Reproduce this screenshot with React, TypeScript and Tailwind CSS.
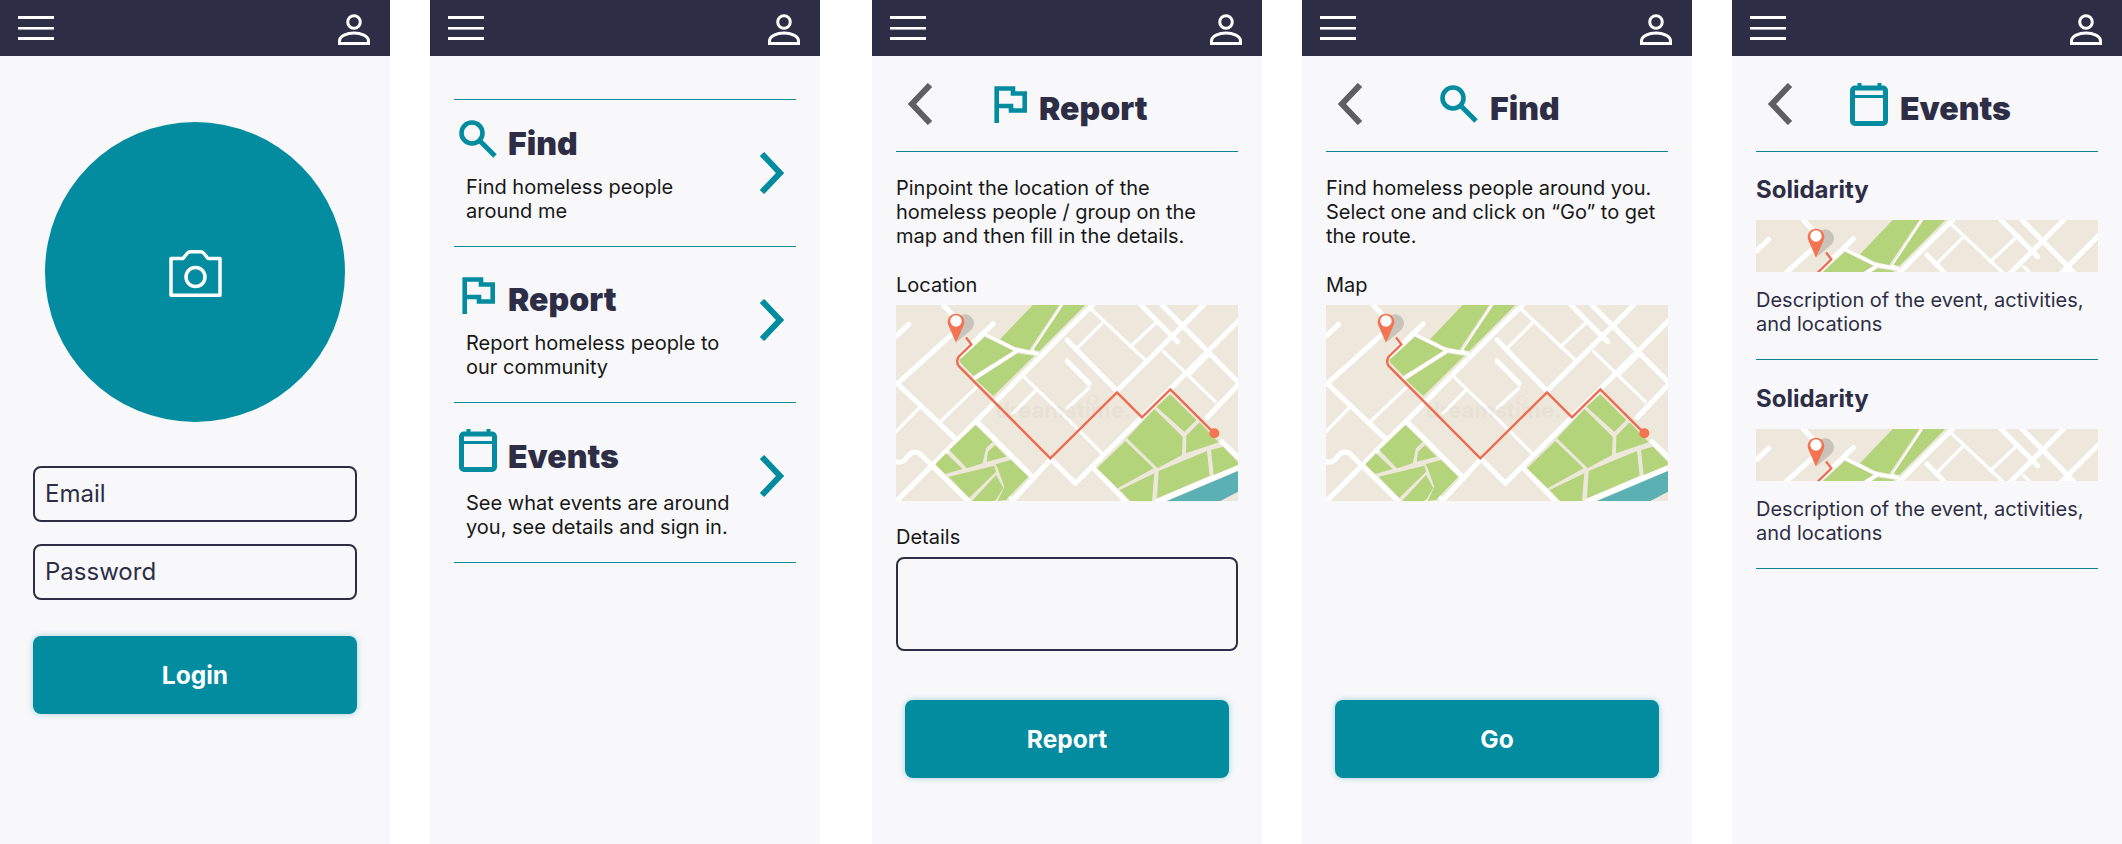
import React from "react";

const font = { fontFamily: "Inter, 'Liberation Sans', sans-serif" };

function Burger() {
  return (
    <svg width="36" height="24" viewBox="0 0 36 24" fill="#fff">
      <rect y="0" width="36" height="3" />
      <rect y="11" width="36" height="2.6" />
      <rect y="21" width="36" height="3" />
    </svg>
  );
}
function User() {
  return (
    <svg width="32" height="32" viewBox="0 0 32 32" fill="none" stroke="#fff" strokeWidth="3">
      <circle cx="16" cy="8" r="6.3" />
      <path d="M1.5 29.5 V27 C1.5 22 9 19 16 19 S30.5 22 30.5 27 V29.5 Z" />
    </svg>
  );
}
function Header() {
  return (
    <div className="flex h-14 shrink-0 items-center justify-between bg-[#2d2e45] pl-[18px] pr-5">
      <Burger />
      <div className="mt-[3px]"><User /></div>
    </div>
  );
}
function Search() {
  return (
    <svg width="38" height="38" viewBox="0 0 38 38" fill="none" stroke="#038c9f" className="shrink-0">
      <circle cx="13" cy="13" r="10.5" strokeWidth="4.6" />
      <path d="M21 21 L36 36" strokeWidth="5" />
    </svg>
  );
}
function Flag() {
  return (
    <svg width="33" height="37" viewBox="0 0 33 37" fill="none" stroke="#038c9f" strokeWidth="4.6" className="shrink-0">
      <path d="M2.7 37 V2.5 H19 V7.5 H30.7 V24.5 H17 V20 H2.7" />
    </svg>
  );
}
function Calendar() {
  return (
    <svg width="38" height="43" viewBox="0 0 38 43" fill="none" stroke="#038c9f" className="shrink-0">
      <rect x="2.5" y="5" width="33" height="35.5" rx="2.5" strokeWidth="5" />
      <path d="M2 13.5 H36" strokeWidth="3" />
      <path d="M9.5 0 V5 M29.5 0 V5" strokeWidth="4" />
    </svg>
  );
}
function Chevron({ back }: { back?: boolean }) {
  return (
    <svg width="25" height="42" viewBox="0 0 25 42" fill="none" stroke={back ? "#5f5f5f" : "#038c9f"} strokeWidth="6" className="shrink-0">
      {back ? <path d="M22 2 L4 21 L22 40" /> : <path d="M3 2 L21 21 L3 40" />}
    </svg>
  );
}
function Camera() {
  return (
    <svg width="53" height="47" viewBox="0 0 53 47" fill="none" stroke="#fff" strokeWidth="3.5" strokeLinejoin="round">
      <path d="M2 8.5 H14 L18.5 3 Q19.5 1.8 21.5 1.8 H31.5 Q33.5 1.8 34.5 3 L39 8.5 H51 V45.2 H2 Z" />
      <circle cx="26.5" cy="27" r="9.5" />
    </svg>
  );
}

const thickRoads = [
  "M2 92 L38 58",
  "M142 0 L172 32",
  "M4 236 L168 88",
  "M292 56 L195 150",
  "M2 234 L175 398",
  "M0 590 L513 75 L590 0",
  "M245 352 L412 518",
  "M465 462 L347 590",
  "M465 462 L538 535 L823 252 L1030 45",
  "M513 105 L663 258",
  "M513 168 L580 236",
  "M663 258 L923 0",
  "M735 0 L845 110",
  "M798 0 L1023 228",
  "M933 338 L1026 240",
  "M593 490 L690 590",
  "M978 410 L1026 456",
  "M0 470 Q20 476 32 458 Q50 432 72 446 L218 590",
  "M783 590 L1026 488",
];
const thinRoads = [
  "M0 380 L68 310",
  "M133 350 L240 248",
  "M270 90 L360 135 L425 146",
  "M360 140 L235 220",
  "M500 0 L410 140",
  "M380 212 L513 340 L618 445",
  "M418 258 L350 325",
  "M583 10 L748 165",
  "M543 130 L618 55",
  "M703 125 L783 50",
  "M803 140 L958 290",
  "M878 210 L938 150",
  "M513 310 L578 250",
  "M285 575 L300 590",
  "M340 575 L355 590",
];
const greens = [
  "312,103 410,0 490,0 400,135 355,125",
  "502,0 568,0 430,138 412,135",
  "267,95 352,137 232,212 195,175 190,165",
  "365,145 415,152 292,273 240,225",
  "238,360 290,410 270,430 260,475 213,490 160,435",
  "297,420 332,455 272,470 276,440",
  "150,445 200,492 148,507 118,478",
  "158,515 295,482 300,500 220,578",
  "345,465 397,515 330,585 305,588 325,545 305,490 298,478",
  "300,510 322,548 300,585 295,588 228,588",
  "823,268 901,345 865,380 781,305",
  "775,312 860,395 858,450 785,490 693,400",
  "911,352 968,412 870,445 871,392",
  "688,408 773,490 665,550 603,490",
  "788,498 933,438 941,512 783,580",
  "945,435 981,425 1026,472 1026,480 953,510",
  "775,505 768,588 703,588 671,555",
];

function MapArt({ mark }: { mark?: boolean }) {
  return (
    <svg width="342" height="196" viewBox="0 0 1026 588" className="block shrink-0" style={font}>
      <rect width="1026" height="588" fill="#eee8dc" />
      <g fill="none" stroke="#fff" strokeLinecap="round" strokeLinejoin="round">
        <g strokeWidth="15">{thickRoads.map((d) => <path key={d} d={d} />)}</g>
        <g strokeWidth="10">{thinRoads.map((d) => <path key={d} d={d} />)}</g>
      </g>
      <g fill="#b3d47a">
        {greens.map((p) => <polygon key={p} points={p} />)}
      </g>
      <polygon points="813,588 1026,498 1026,560 973,588" fill="#5bb0b4" />
      {mark ? (
        <g opacity="0.025">
          <text x="300" y="338" fontSize="66" fontWeight="700" fill="#000">dreamstime.</text>
          <circle cx="589" cy="285" r="13" fill="none" stroke="#000" strokeWidth="4" />
        </g>
      ) : null}
      <path d="M210 97 L226 118 L188 155 Q178 172 190 185 L463 460 L663 262 L738 337 L823 253 L955 385" fill="none" stroke="#ee6a4e" strokeWidth="7" />
      <circle cx="955" cy="385" r="15" fill="#f47452" />
      <circle cx="207" cy="55" r="27" fill="#c9c4bb" />
      <polygon points="184,110 187,62 222,78" fill="#c9c4bb" />
      <path d="M180 113 L158 63 A25 25 0 1 1 202 63 Z" fill="#f47452" />
      <circle cx="180" cy="48" r="17" fill="#fff" />
    </svg>
  );
}

function Btn({ label, cls }: { label: string; cls: string }) {
  return (
    <div className={`flex h-[78px] w-[324px] items-center justify-center rounded-lg bg-[#038c9f] text-[24.5px] font-bold text-white shadow-[0_0_6px_rgba(3,140,159,0.35)] ${cls}`}>
      {label}
    </div>
  );
}

function Field({ label, cls }: { label: string; cls: string }) {
  return (
    <div className={`flex h-14 w-[324px] items-center rounded-lg border-2 border-[#2d2e45] pl-[10px] text-[24px] text-[#2d2e45] ${cls}`}>
      {label}
    </div>
  );
}

function Screen({ children, cls = "" }: { children?: React.ReactNode; cls?: string }) {
  return (
    <div className={`flex h-[844px] w-[390px] shrink-0 flex-col bg-[#f8f8fb] ${cls}`}>
      <Header />
      {children}
    </div>
  );
}

function MenuItem({ icon, title, lines, cls, rowCls, iconCls, titleCls }: { icon: React.ReactNode; title: string; lines: string[]; cls: string; rowCls: string; iconCls: string; titleCls: string }) {
  return (
    <div className={`relative border-b border-[#038c9f] ${cls}`}>
      <div className={`flex items-start ${rowCls}`}>
        <div className={iconCls}>{icon}</div>
        <div className={`text-[32px] font-black leading-[38px] text-[#2d2e45] ${titleCls}`}>{title}</div>
      </div>
      <div className="pl-3 text-[20px] leading-6 text-[#171717]">
        {lines.map((l) => <div key={l}>{l}</div>)}
      </div>
      <div className="absolute left-[305px] top-[52px]"><Chevron /></div>
    </div>
  );
}

function TitleRow({ icon, title, gap, iconTop }: { icon: React.ReactNode; title: string; gap: string; iconTop: string }) {
  return (
    <div className="relative mx-6 flex h-[96px] shrink-0 items-start border-b border-[#0d8598]">
      <div className="ml-3 mt-[27px]"><Chevron back /></div>
      <div className={`${gap} ${iconTop}`}>{icon}</div>
      <div className="ml-3 mt-[34px] text-[32px] font-black leading-[38px] text-[#2d2e45]">{title}</div>
    </div>
  );
}

function EventCard({ cls }: { cls: string }) {
  return (
    <div className={`border-b border-[#0d8598] ${cls}`}>
      <div className="text-[24px] font-bold leading-[30px] text-[#2d2e45]">Solidarity</div>
      <div className="mt-[15px] h-[52px] w-[342px] overflow-hidden"><MapArt /></div>
      <div className="mt-4 text-[20px] leading-6 text-[#2d2e45]">
        <div>Description of the event, activities,</div>
        <div>and locations</div>
      </div>
    </div>
  );
}

export default function App() {
  return (
    <div className="flex h-[844px] w-[2122px] overflow-hidden bg-white" style={font}>
      <Screen>
        <div className="mx-auto mt-[66px] flex h-[300px] w-[300px] items-center justify-center rounded-full bg-[#038c9f]">
          <div className="mt-[2px]"><Camera /></div>
        </div>
        <Field label="Email" cls="ml-[33px] mt-11" />
        <Field label="Password" cls="ml-[33px] mt-[22px]" />
        <Btn label="Login" cls="ml-[33px] mt-9" />
      </Screen>

      <Screen cls="ml-10">
        <div className="mx-6 mt-[43px] border-t border-[#038c9f]">
          <MenuItem icon={<Search />} title="Find" lines={["Find homeless people", "around me"]} cls="h-[147px]" rowCls="h-[75px]" iconCls="ml-[5px] mt-5" titleCls="ml-[11px] mt-[25px]" />
          <MenuItem icon={<Flag />} title="Report" lines={["Report homeless people to", "our community"]} cls="h-[156px]" rowCls="h-[84px]" iconCls="ml-2 mt-[30px]" titleCls="ml-[13px] mt-[34px]" />
          <MenuItem icon={<Calendar />} title="Events" lines={["See what events are around", "you, see details and sign in."]} cls="h-[160px]" rowCls="h-[88px]" iconCls="ml-[5px] mt-[26px]" titleCls="ml-[11px] mt-[35px]" />
        </div>
      </Screen>

      <Screen cls="ml-[52px]">
        <TitleRow icon={<Flag />} title="Report" gap="ml-[61px]" iconTop="mt-[30px]" />
        <div className="mx-6 mt-6 text-[20px] leading-6 text-[#171717]">
          <div>Pinpoint the location of the</div>
          <div>homeless people / group on the</div>
          <div>map and then fill in the details.</div>
          <div className="mt-[25px]">Location</div>
          <div className="mt-2"><MapArt mark /></div>
          <div className="mt-6">Details</div>
          <div className="mt-2 h-[94px] w-[342px] rounded-lg border-2 border-[#2d2e45]" />
        </div>
        <Btn label="Report" cls="ml-[33px] mt-[49px]" />
      </Screen>

      <Screen cls="ml-10">
        <TitleRow icon={<Search />} title="Find" gap="ml-[77px]" iconTop="mt-[29px]" />
        <div className="mx-6 mt-6 text-[20px] leading-6 text-[#171717]">
          <div>Find homeless people around you.</div>
          <div>Select one and click on “Go” to get</div>
          <div>the route.</div>
          <div className="mt-[25px]">Map</div>
          <div className="mt-2"><MapArt mark /></div>
        </div>
        <Btn label="Go" cls="ml-[33px] mt-[199px]" />
      </Screen>

      <Screen cls="ml-10">
        <TitleRow icon={<Calendar />} title="Events" gap="ml-[57px]" iconTop="mt-[27px]" />
        <div className="mx-6">
          <EventCard cls="h-[208px] pt-[23px]" />
          <EventCard cls="h-[209px] pt-6" />
        </div>
      </Screen>
    </div>
  );
}
